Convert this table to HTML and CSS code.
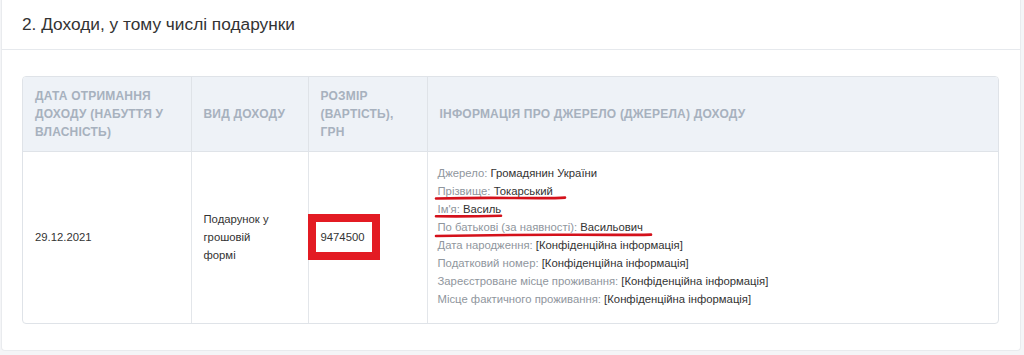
FILE: index.html
```html
<!DOCTYPE html>
<html lang="uk">
<head>
<meta charset="utf-8">
<title>Доходи</title>
<link rel="stylesheet" href="styles.css">
</head>
<body>
<section class="card">
  <header class="card-head">
    <h2 class="card-title">2. Доходи, у тому числі подарунки</h2>
  </header>
  <div class="card-body">
    <div class="table-wrap">
      <table class="decl">
        <colgroup>
          <col class="c1"><col class="c2"><col class="c3"><col class="c4">
        </colgroup>
        <thead>
          <tr>
            <th>Дата отримання доходу (набуття у власність)</th>
            <th>Вид доходу</th>
            <th>Розмір (вартість), грн</th>
            <th>Інформація про джерело (джерела) доходу</th>
          </tr>
        </thead>
        <tbody>
          <tr>
            <td>29.12.2021</td>
            <td class="kind">Подарунок у грошовій формі</td>
            <td><span class="amount">9474500</span></td>
            <td class="info">
              <div class="line"><span class="lbl">Джерело:</span> Громадянин України</div>
              <div class="line"><span class="lbl">Прізвище:</span> Токарський<svg class="mark m1" viewBox="0 0 131 6" preserveAspectRatio="none"><path d="M1 3.5 Q40 2.6 80 3 T130 2.6" /></svg></div>
              <div class="line"><span class="lbl">Ім'я:</span> Василь<svg class="mark m2" viewBox="0 0 67 6" preserveAspectRatio="none"><path d="M1 3.2 Q30 3.6 66 2.8" /></svg></div>
              <div class="line"><span class="lbl">По батькові (за наявності):</span> Васильович<svg class="mark m3" viewBox="0 0 217 6" preserveAspectRatio="none"><path d="M1 4 Q70 2.6 140 2.8 T216 2.6" /></svg></div>
              <div class="line"><span class="lbl">Дата народження:</span> [Конфіденційна інформація]</div>
              <div class="line"><span class="lbl">Податковий номер:</span> [Конфіденційна інформація]</div>
              <div class="line"><span class="lbl">Зареєстроване місце проживання:</span> [Конфіденційна інформація]</div>
              <div class="line"><span class="lbl">Місце фактичного проживання:</span> [Конфіденційна інформація]</div>
            </td>
          </tr>
        </tbody>
      </table>
    </div>
  </div>
</section>
</body>
</html>
```

FILE: styles.css
```css
* { box-sizing: border-box; }
html, body { margin: 0; padding: 0; }
body {
  background: #f4f5f7;
  font-family: "Liberation Sans", Arial, sans-serif;
  color: #333;
  width: 1024px;
  height: 355px;
  overflow: hidden;
}
.card {
  background: #fff;
  margin: 0 3px 0 1px;
  border: 1px solid #e9ebee;
  border-top: none;
  border-radius: 0 0 4px 4px;
}
.card-head {
  height: 50px;
  border-bottom: 1px solid #e6e9ed;
  padding: 0 20px;
  display: flex;
  align-items: center;
}
.card-title {
  margin: 0;
  font-size: 17.3px;
  font-weight: normal;
  color: #333;
  line-height: 22px;
  padding-bottom: 2px;
}
.card-body {
  padding: 26px 21px 26px 20px;
}
.table-wrap {
  border: 1px solid #dfe3e8;
  border-radius: 4px;
  overflow: hidden;
}
.decl {
  width: 100%;
  border-collapse: collapse;
  table-layout: fixed;
  font-size: 11.3px;
}
.c1 { width: 168px; }
.c2 { width: 117px; }
.c3 { width: 119px; }
.decl th {
  background: #eef2f7;
  color: #a7b1be;
  font-weight: bold;
  font-size: 12px;
  text-transform: uppercase;
  text-align: left;
  vertical-align: middle;
  line-height: 18px;
  height: 74px;
  padding: 0 12px;
  letter-spacing: 0.2px;
  border-left: 1px solid #dfe3e8;
  border-bottom: 1px solid #dfe3e8;
}
.decl th:first-child, .decl td:first-child { border-left: none; padding-left: 12px; }
.decl td {
  vertical-align: middle;
  line-height: 18px;
  padding: 0 12px;
  height: 171px;
  color: #333;
  border-left: 1px solid #e3e6ea;
}
.decl td.kind { padding-right: 32px; }
.decl td.info {
  padding: 12px 10px 15px 10px;
  vertical-align: top;
}
.line {
  position: relative;
  white-space: nowrap;
  height: 18px;
}
.lbl { color: #8f969d; }
.amount {
  position: relative;
  display: inline-block;
  line-height: 14px;
}
.amount::before {
  content: "";
  position: absolute;
  left: -13px;
  right: -16px;
  top: -16px;
  bottom: -16px;
  border: 8px solid #e31b23;
}
.mark {
  position: absolute;
  left: -3px;
  height: 6px;
  overflow: visible;
}
.mark path {
  fill: none;
  stroke: #d4111b;
  stroke-width: 2.6;
  stroke-linecap: round;
  vector-effect: non-scaling-stroke;
}
.m1 { top: 13px; width: 131px; }
.m2 { top: 13px; width: 67px; }
.m3 { top: 14px; width: 217px; }
```
